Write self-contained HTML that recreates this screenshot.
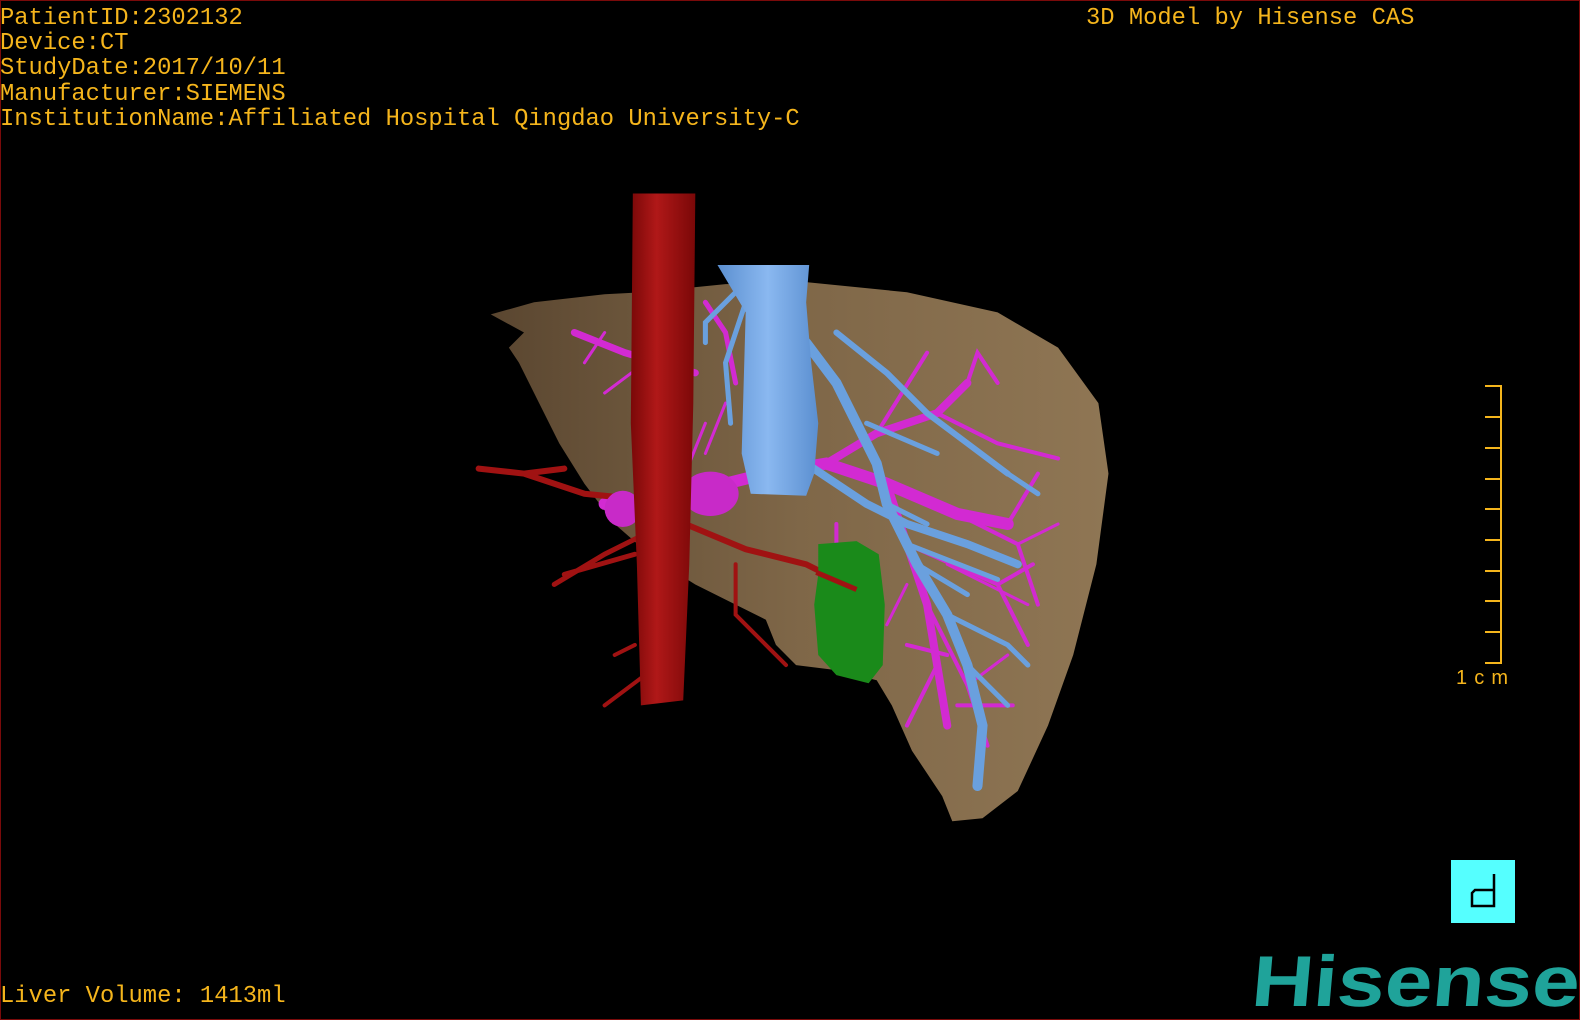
<!DOCTYPE html>
<html><head><meta charset="utf-8"><style>
html,body{margin:0;padding:0;background:#000;width:1580px;height:1020px;overflow:hidden}
#f{position:absolute;left:0;top:0;width:1578px;height:1018px;border:1px solid #7a0a0a}
.t{position:absolute;font-family:"Liberation Mono",monospace;font-size:23.8px;color:#f5b51c;line-height:25.2px;white-space:pre;letter-spacing:0}
</style></head><body>
<div id="f"></div>
<div class="t" style="left:0;top:6px">PatientID:2302132
Device:CT
StudyDate:2017/10/11
Manufacturer:SIEMENS
InstitutionName:Affiliated Hospital Qingdao University-C</div>
<div class="t" style="left:1086px;top:6px">3D Model by Hisense CAS</div>
<div class="t" style="left:0;top:984px">Liver Volume: 1413ml</div>
<svg width="1580" height="1020" style="position:absolute;left:0;top:0">
<defs>
<linearGradient id="lv" x1="0" y1="0" x2="1" y2="0"><stop offset="0" stop-color="#5a4630"/><stop offset="0.5" stop-color="#7f6748"/><stop offset="1" stop-color="#8f7654"/></linearGradient>
<linearGradient id="ao" x1="0" x2="1"><stop offset="0" stop-color="#7a0808"/><stop offset="0.4" stop-color="#b01818"/><stop offset="1" stop-color="#7a0808"/></linearGradient>
<linearGradient id="iv" x1="0" x2="1"><stop offset="0" stop-color="#5b8fd0"/><stop offset="0.5" stop-color="#8ab8f0"/><stop offset="1" stop-color="#5b8fd0"/></linearGradient>
</defs>
<g transform="scale(1.0077)">
<path fill="url(#lv)" d="M487,312 L530,300 L600,292 L640,290 L720,282 L800,280 L900,290 L990,310 L1050,345 L1090,400 L1100,470 L1088,560 L1065,650 L1040,720 L1010,785 L975,812 L945,815 L935,790 L905,745 L885,700 L870,675 L830,665 L790,660 L770,640 L760,615 L730,600 L690,580 L650,555 L610,520 L580,480 L555,440 L535,400 L515,360 L505,345 L520,330 Z"/>
<g fill="none" stroke-linecap="round">
<g stroke="#d22ad2">
<path stroke-width="12" d="M600,500 L660,505 L720,480 L760,470 L820,460 L880,480 L950,510 L1000,520"/>
<path stroke-width="8" d="M820,460 L870,430 L930,410 L960,380"/>
<path stroke-width="8" d="M880,480 L900,540 L920,600 L930,660 L940,720"/>
<path stroke-width="7" d="M690,370 L620,350 L570,330"/>
<path stroke-width="5" d="M700,300 L720,330 L730,380"/>
<path stroke-width="4" d="M930,410 L990,440 L1050,455 M950,510 L1010,540 L1030,600 M1000,520 L1030,470 M900,540 L990,580 L1020,640 M920,600 L960,680 L980,740 M930,660 L900,720 M960,380 L970,350 L990,380 M870,430 L920,350 M830,520 L830,580 M990,580 L1025,560 M900,640 L940,650 M950,700 L1005,700"/>
<path stroke-width="3" d="M600,330 L580,360 M640,360 L600,390 M700,420 L680,470 M720,400 L700,450 M1010,540 L1050,520 M940,560 L1020,600 M900,580 L880,620 M960,680 L1000,650"/>
</g>
<g stroke="#6aa0de">
<path stroke-width="10" d="M800,340 L830,380 L850,420 L870,460 L880,500 L910,560 L940,610 L960,660 L975,720 L970,780"/>
<path stroke-width="8" d="M800,460 L860,500 L900,520 L960,540 L1010,560"/>
<path stroke-width="6" d="M830,330 L880,370 L920,410 L960,440 L1000,470"/>
<path stroke-width="5" d="M730,290 L700,320 L700,340 M740,300 L720,360 L725,420 M940,610 L1000,640 L1020,660 M960,660 L1000,700 M910,560 L960,590 M880,500 L920,520 M860,420 L930,450 M1000,470 L1030,490 M900,540 L990,575"/>
</g>
<g stroke="#a01212">
<path stroke-width="6" d="M475,465 L520,470 L560,465 M520,470 L580,490 L630,495"/>
<path stroke-width="6" d="M680,520 L740,545 L800,560 L850,585"/>
<path stroke-width="5" d="M640,530 L600,550 L550,580 M630,550 L560,570"/>
<path stroke-width="4" d="M730,560 L730,610 L760,640 L780,660 M630,640 L610,650 M640,670 L600,700"/>
</g>
</g>
<ellipse cx="618" cy="505" rx="18" ry="18" fill="#c82ac8"/>
<ellipse cx="705" cy="490" rx="28" ry="22" fill="#c82ac8"/>
<path fill="url(#ao)" d="M628,192 L690,192 L688,400 L684,560 L678,695 L636,700 L632,560 L626,420 Z"/>
<path fill="url(#iv)" d="M712,263 L803,263 L800,300 L805,360 L812,420 L808,470 L800,492 L745,490 L736,450 L738,380 L740,310 Z"/>
<path fill="#1a8a1a" d="M812,540 L850,537 L872,550 L878,600 L876,660 L862,678 L830,670 L812,650 L808,600 L812,570 Z"/>
<path fill="none" stroke="#a01212" stroke-width="5" d="M810,568 L850,585"/>
</g>
<g stroke="#f5b51c" stroke-width="2" fill="none">
<path d="M1485,386 L1501,386 L1501,663 L1485,663"/>
<path d="M1485,417 H1501 M1485,448 H1501 M1485,479 H1501 M1485,509 H1501 M1485,540 H1501 M1485,571 H1501 M1485,601 H1501 M1485,632 H1501"/>
</g>
<text x="1456" y="684" font-family="Liberation Sans,sans-serif" font-size="20" fill="#f5b51c" textLength="52" lengthAdjust="spacing">1cm</text>
<rect x="1451" y="860" width="64" height="63" fill="#55ffff"/>
<path d="M1494,874 V906 H1472 V893 L1475,890 H1494" fill="none" stroke="#000" stroke-width="2.5"/>
<text x="0" y="0" transform="translate(1250,1006) skewX(-5)" font-family="Liberation Sans,sans-serif" font-weight="bold" font-size="72" fill="#1fa39a" textLength="328" lengthAdjust="spacingAndGlyphs">Hisense</text>
</svg>
</body></html>
